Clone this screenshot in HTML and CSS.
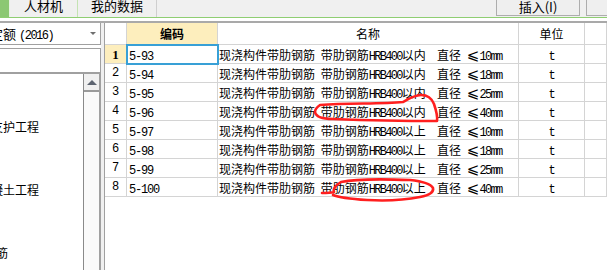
FILE: index.html
```html
<!DOCTYPE html>
<html lang="zh-CN">
<head>
  <meta charset="UTF-8" />
  <title>定额查询</title>
  <link rel="stylesheet" href="styles.css">
</head>
<body>

  <div class="topbar">
    <div class="tab tab-on"></div>
    <div class="tab tab-rcj">人材机</div>
    <div class="tab tab-mine">我的数据</div>
    <div class="tools">
      <button class="btn btn-insert">插入(I)</button>
      <button class="btn btn-more"></button>
    </div>
  </div>

  <div class="main">
    <div class="side">
      <div class="combo">
        <span class="combo-text">定额<span class="en">(2016)</span></span>
        <span class="combo-arrow"></span>
      </div>
      <div class="search"></div>
      <div class="tree">
        <div class="tree-body">
          <ul class="tree-list">
            <li class="p4">土石方工程</li>
            <li class="p17">桩基工程</li>
            <li class="p71">基坑支护工程</li>
            <li class="p17">砌筑工程</li>
            <li class="p4">混凝土及钢筋</li>
            <li class="p83">混凝土工程</li>
            <li class="p17">现浇混凝土</li>
            <li class="p30">钢筋工程</li>
            <li class="p88">钢筋</li>
            <li class="p75 cur">钢筋工程</li>
          </ul>
        </div>
        <div class="vscroll">
          <div class="vscroll-up"><span class="arrow-up"></span></div>
        </div>
      </div>
    </div>

    <div class="splitter"></div>

    <div class="grid-wrap">
      <table class="grid">
        <thead>
          <tr>
            <th class="c-no"></th>
            <th class="c-code sel-col">编码</th>
            <th class="c-name">名称</th>
            <th class="c-unit">单位</th>
            <th class="c-rest"></th>
          </tr>
        </thead>
        <tbody>
          <tr>
            <td class="rn rn-on">1</td>
            <td class="code sel"><span class="en">5-93</span></td>
            <td class="name">现浇构件带肋钢筋 带肋钢筋<span class="en">HRB400</span>以内  直径 <span class="le">⩽</span><span class="en">10mm</span></td>
            <td class="unit"><span class="en">t</span></td>
            <td></td>
          </tr>
          <tr>
            <td class="rn">2</td>
            <td class="code"><span class="en">5-94</span></td>
            <td class="name">现浇构件带肋钢筋 带肋钢筋<span class="en">HRB400</span>以内  直径 <span class="le">⩽</span><span class="en">18mm</span></td>
            <td class="unit"><span class="en">t</span></td>
            <td></td>
          </tr>
          <tr>
            <td class="rn">3</td>
            <td class="code"><span class="en">5-95</span></td>
            <td class="name">现浇构件带肋钢筋 带肋钢筋<span class="en">HRB400</span>以内  直径 <span class="le">⩽</span><span class="en">25mm</span></td>
            <td class="unit"><span class="en">t</span></td>
            <td></td>
          </tr>
          <tr>
            <td class="rn">4</td>
            <td class="code"><span class="en">5-96</span></td>
            <td class="name">现浇构件带肋钢筋 带肋钢筋<span class="en">HRB400</span>以内  直径 <span class="le">⩽</span><span class="en">40mm</span></td>
            <td class="unit"><span class="en">t</span></td>
            <td></td>
          </tr>
          <tr>
            <td class="rn">5</td>
            <td class="code"><span class="en">5-97</span></td>
            <td class="name">现浇构件带肋钢筋 带肋钢筋<span class="en">HRB400</span>以上  直径 <span class="le">⩽</span><span class="en">10mm</span></td>
            <td class="unit"><span class="en">t</span></td>
            <td></td>
          </tr>
          <tr>
            <td class="rn">6</td>
            <td class="code"><span class="en">5-98</span></td>
            <td class="name">现浇构件带肋钢筋 带肋钢筋<span class="en">HRB400</span>以上  直径 <span class="le">⩽</span><span class="en">18mm</span></td>
            <td class="unit"><span class="en">t</span></td>
            <td></td>
          </tr>
          <tr>
            <td class="rn">7</td>
            <td class="code"><span class="en">5-99</span></td>
            <td class="name">现浇构件带肋钢筋 带肋钢筋<span class="en">HRB400</span>以上  直径 <span class="le">⩽</span><span class="en">25mm</span></td>
            <td class="unit"><span class="en">t</span></td>
            <td></td>
          </tr>
          <tr>
            <td class="rn">8</td>
            <td class="code"><span class="en">5-100</span></td>
            <td class="name">现浇构件带肋钢筋 带肋钢筋<span class="en">HRB400</span>以上  直径 <span class="le">⩽</span><span class="en">40mm</span></td>
            <td class="unit"><span class="en">t</span></td>
            <td></td>
          </tr>
        </tbody>
      </table>
    </div>
  </div>

  <!-- hand-drawn red marks over rows 4 and 8 -->
  <svg class="marks" width="607" height="270" viewBox="0 0 607 270">
    <path d="M320 105 C350 103 380 104 403 102 C410 98 415 95 421 95 C428 95 432 99 434 104 C436 110 438 116 437 121 C410 121 360 120 333 119 C322 119 316 117 315 112 C315 109 317 107 320 105" />
    <path d="M322 193 C326 193 330 193 334 192 C333 189 336 185 341 182 C355 179 385 179 410 180 C420 181 430 183 433 188 C434 192 430 195 420 197 C405 200 385 201 367 200 C352 199 340 198 333 195" />
  </svg>

</body>
</html>
```

FILE: styles.css
```css
* {
  box-sizing: border-box;
}

body {
  margin: 0;
  width: 607px;
  height: 270px;
  overflow: hidden;
  background: #fff;
  color: #000;
  font-family: "Noto Sans CJK SC", sans-serif;
  font-size: 12px;
}

.en {
  font-family: "Liberation Mono", monospace;
  font-size: 12px;
  line-height: 1;
  letter-spacing: -1.2px;
}

.le {
  font-family: "DejaVu Sans", "Noto Sans CJK SC", sans-serif;
  font-size: 15px;
  line-height: 1;
}

/* top tabs */
.topbar {
  display: flex;
  height: 18px;
  background: #f0f0f0;
  border-bottom: 1px solid #8fce72;
  overflow: hidden;
}

.tab {
  flex-shrink: 0;
  height: 17px;
  font-size: 13px;
  line-height: 11px;
  text-align: center;
  border-right: 1px solid #c4e3b3;
}

.tab-on {
  width: 10px;
  background: #8cc873;
  border-right-color: #e8f3e2;
}

.tab-rcj {
  width: 68px;
}

.tab-mine {
  width: 79px;
  border-right-color: #cfcfcf;
}

.tools {
  display: flex;
  gap: 6px;
  flex-shrink: 0;
  margin-left: 339px;
}

.btn {
  display: block;
  flex-shrink: 0;
  height: 19px;
  margin-top: -3px;
  padding: 0;
  border: 1px solid #adadad;
  background: #efefef;
  color: #000;
  font-family: "Noto Sans CJK SC", sans-serif;
  font-size: 13px;
  line-height: 14px;
}

.btn-insert {
  width: 84px;
}

.btn-more {
  width: 60px;
}

/* main area */
.main {
  display: flex;
  height: 249px;
  margin-top: 3px;
  border-top: 2px solid #a9a9a9;
}

.side {
  display: flex;
  flex-direction: column;
  width: 101px;
  flex-shrink: 0;
}

.combo {
  display: flex;
  align-items: center;
  flex-shrink: 0;
  height: 22px;
  border-right: 1px solid #a0a0a0;
  border-bottom: 1px solid #a0a0a0;
  overflow: hidden;
  white-space: nowrap;
  font-size: 13px;
}

.combo-text {
  margin-left: -10px;
}

.combo .en {
  margin-left: 3px;
  letter-spacing: -1.5px;
}

.combo-arrow {
  width: 0;
  height: 0;
  margin-left: auto;
  margin-right: 4px;
  border-left: 3px solid transparent;
  border-right: 3px solid transparent;
  border-top: 3px solid #6f6f6f;
}

.search {
  flex-shrink: 0;
  height: 25px;
  margin-top: 3px;
  border-top: 1px solid #a0a0a0;
  border-right: 1px solid #a0a0a0;
  border-bottom: 1px solid #a0a0a0;
}

.tree {
  display: flex;
  flex: 1 1 0;
  min-height: 0;
  border-top: 1px solid #a0a0a0;
  border-right: 1px solid #a0a0a0;
}

.tree-body {
  width: 83px;
  flex-shrink: 0;
  overflow: hidden;
}

.tree-list {
  list-style: none;
  width: 300px;
  margin: 0 0 0 -104px;
  padding: 0;
  font-size: 12px;
}

.tree-list li {
  height: 21px;
  line-height: 21px;
  white-space: nowrap;
}

.tree-list .cur {
  margin-top: 4px;
  color: #1e7fe0;
}

.p4 { padding-left: 4px; }
.p17 { padding-left: 17px; }
.p30 { padding-left: 30px; }
.p71 { padding-left: 71px; }
.p75 { padding-left: 75px; }
.p83 { padding-left: 83px; }
.p88 { padding-left: 88px; }

.vscroll {
  width: 17px;
  flex-shrink: 0;
  border-left: 1px solid #8a8a8a;
  border-right: 1px solid #a0a0a0;
  background: #fafafa;
}

.vscroll-up {
  display: flex;
  align-items: center;
  justify-content: center;
  height: 18px;
  border-bottom: 2px solid #9a9a9a;
  background: #f0f0f0;
}

.arrow-up {
  display: block;
  width: 0;
  height: 0;
  border-left: 5px solid transparent;
  border-right: 5px solid transparent;
  border-bottom: 5px solid #5d6470;
}

.splitter {
  width: 3px;
  flex-shrink: 0;
  background: #f0f0f0;
}

/* grid */
.grid-wrap {
  flex: 1;
  overflow: hidden;
  border-left: 1px solid #a0a0a0;
  background: #fff;
}

.grid {
  width: 502px;
  table-layout: fixed;
  border-spacing: 0;
}

.grid th,
.grid td {
  padding: 0;
  border-right: 1px solid #d4d4d4;
  border-bottom: 1px solid #d4d4d4;
  white-space: nowrap;
  overflow: hidden;
}

.grid th {
  height: 22px;
  font-weight: normal;
  line-height: 20px;
  text-align: center;
  background: #fff;
}

.c-no { width: 22px; }
.c-code { width: 91px; }
.c-name { width: 301px; }
.c-unit { width: 66px; }

.grid th.sel-col {
  background: #fdeebd;
  font-weight: bold;
}

.grid td {
  height: 19px;
  line-height: 17px;
}

.rn {
  text-align: center;
  font-family: "Liberation Mono", monospace;
  font-size: 12px;
}

.rn-on {
  background: #fdeebd;
  font-family: "Liberation Serif", serif;
  font-weight: bold;
  font-size: 13px;
}

.grid .code {
  padding-left: 2px;
}

.grid .name {
  padding-left: 1px;
  white-space: pre;
  word-spacing: 3px;
}

.name .en {
  letter-spacing: -1.7px;
}

.unit {
  text-align: center;
}

.sel {
  outline: 2px solid #38a0d6;
  outline-offset: -1px;
}

/* annotation overlay */
.marks {
  position: absolute;
  top: 0;
  left: 0;
  pointer-events: none;
}

.marks path {
  fill: none;
  stroke: #ff1f1f;
  stroke-width: 2.6;
  stroke-linecap: round;
  stroke-linejoin: round;
}
```
